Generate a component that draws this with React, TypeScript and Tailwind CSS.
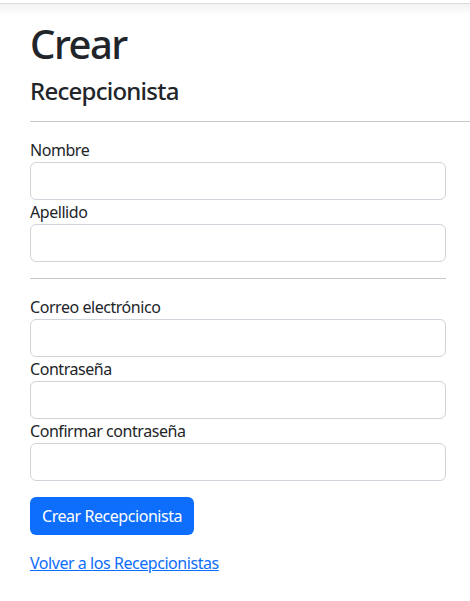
import React from "react";

const Field = ({ label, type = "text" }: { label: string; type?: string }) => (
  <div className="flex flex-col">
    <label className="text-[16px] leading-6 tracking-[-0.45px] text-[#212529]">{label}</label>
    <input
      type={type}
      className="h-[38px] w-full rounded-[6px] border border-[#ced4da] bg-white px-3 outline-none"
    />
  </div>
);

export default function App() {
  return (
    <div className="min-h-[601px] bg-white text-[#212529]" style={{ fontFamily: '"Noto Sans", sans-serif' }}>
      {/* navbar bottom edge */}
      <div className="h-[3px] bg-white" />
      <div className="h-px bg-[#dcdcdc]" />
      <div className="h-3 bg-gradient-to-b from-[#f3f3f3] to-white" />

      <div className="pl-[30px] pt-1">
        <h1 className="mb-2 text-[40px] font-medium leading-[48px] tracking-[-1.5px]">Crear</h1>
        <h4 className="text-[24px] font-medium leading-[29px] tracking-[-0.75px]">Recepcionista</h4>
        <hr className="my-4 border-t border-[#c8c8c8]" />

        <div className="w-[416px]">
          <form className="flex flex-col">
            <Field label="Nombre" />
            <Field label="Apellido" />
            <hr className="my-4 border-t border-[#c8c8c8]" />
            <Field label="Correo electrónico" type="email" />
            <Field label="Contraseña" type="password" />
            <Field label="Confirmar contraseña" type="password" />
            <div className="mt-4">
              <button
                type="submit"
                className="h-[38px] rounded-[6px] bg-[#0d6efd] px-3 text-[16px] tracking-[-0.45px] text-white"
              >
                Crear Recepcionista
              </button>
            </div>
          </form>
          <div className="mt-4">
            <a href="#" className="text-[16px] leading-6 tracking-[-0.45px] text-[#0d6efd] underline">
              Volver a los Recepcionistas
            </a>
          </div>
        </div>
      </div>
    </div>
  );
}
